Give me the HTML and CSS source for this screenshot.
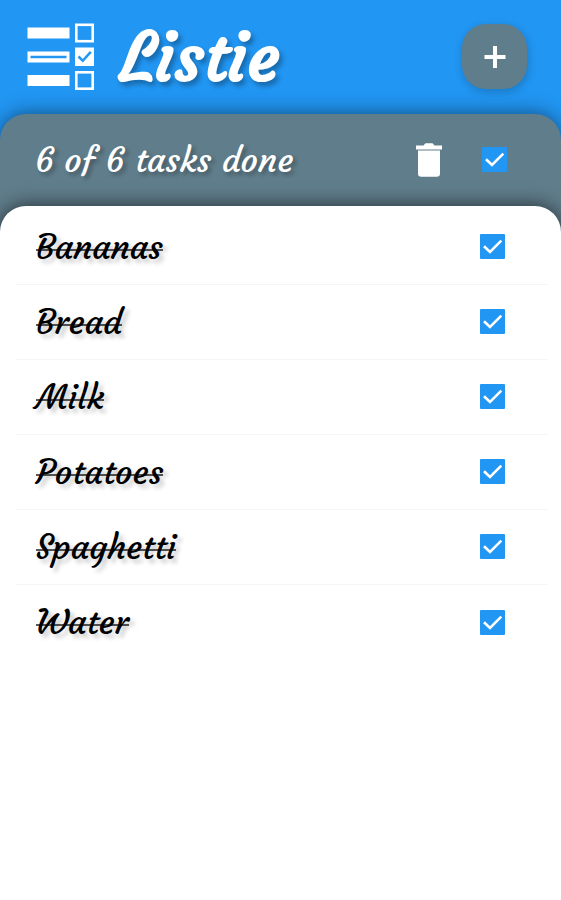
FILE: index.html
```html
<!DOCTYPE html>
<html lang="en">
<head>
    <meta charset="UTF-8">
    <meta name="viewport" content="width=device-width, initial-scale=1.0">
    <title>Listie</title>
    <link rel="stylesheet" href="styles.css">
</head>
<body>
    <svg width="0" height="0" class="defs">
        <symbol id="check" viewBox="0 0 25 25">
            <rect width="25" height="25" rx="1" fill="#2196f3"/>
            <path d="M4 12.2l6 5.8L21.3 6.7" fill="none" stroke="#fff" stroke-width="2.6"/>
        </symbol>
    </svg>
    <header>
        <svg class="logo" viewBox="0 0 68 68">
            <g fill="#fff">
                <rect x="0.5" y="4.5" width="42" height="11"/>
                <rect x="0.5" y="28.5" width="42" height="11"/>
                <rect x="0.5" y="52" width="42" height="11"/>
                <rect x="48" y="24.5" width="19" height="18.5"/>
            </g>
            <path d="M3.5 34h36" stroke="#2196f3" stroke-width="2.5"/>
            <g fill="none" stroke="#fff" stroke-width="2.6">
                <rect x="49.3" y="1.8" width="16.4" height="16.4"/>
                <rect x="49.3" y="49.3" width="16.4" height="16.4"/>
            </g>
            <path d="M51.5 33.5l4.3 4.3 8-9" fill="none" stroke="#2196f3" stroke-width="2.5"/>
        </svg>
        <h1>Listie</h1>
        <button class="add" aria-label="Add">
            <svg viewBox="0 0 22 24"><path d="M9 1h4v9h8.500v4H13v9H9v-9H.5v-4H9z" fill="#fff"/></svg>
        </button>
    </header>
    <main>
        <div class="status">
            <span class="count">6 of 6 tasks done</span>
            <svg class="trash" viewBox="0 0 26 34" fill="#fff">
                <path d="M0 2.5h7.5L9.5.3h7l2 2.2H26V6.500H0z"/>
                <path d="M2 7.5h22V30.5q0 3.3-3.3 3.3H5.3Q2 33.8 2 30.5z"/>
            </svg>
            <svg class="check"><use href="#check"/></svg>
        </div>
        <ul>
            <li><span>Bananas</span><svg class="check"><use href="#check"/></svg></li>
            <li><span>Bread</span><svg class="check"><use href="#check"/></svg></li>
            <li><span>Milk</span><svg class="check"><use href="#check"/></svg></li>
            <li><span>Potatoes</span><svg class="check"><use href="#check"/></svg></li>
            <li><span>Spaghetti</span><svg class="check"><use href="#check"/></svg></li>
            <li><span>Water</span><svg class="check"><use href="#check"/></svg></li>
        </ul>
    </main>
</body>
</html>
```
FILE: styles.css
```css
* {
    box-sizing: border-box;
}
body {
    margin: 0;
    height: 900px;
    display: flex;
    flex-direction: column;
    overflow: hidden;
    background-color: #2196f3;
    font-family: Courgette, Lato, sans-serif;
}
.defs {
    position: absolute;
}
header {
    height: 113.5px;
    padding: 0 34px 0 27px;
    display: flex;
    align-items: center;
}
.logo {
    width: 68px;
    height: 68px;
}
h1 {
    margin: 2px auto 0 25px;
    color: #fff;
    font-size: 68px;
    line-height: 80px;
    font-weight: bold;
    text-shadow: 3px 4px 5px rgba(0, 0, 0, 0.3);
}
.add {
    width: 65px;
    height: 65px;
    padding: 0;
    display: flex;
    align-items: center;
    justify-content: center;
    border: none;
    border-radius: 24px;
    background-color: #607d8b;
    box-shadow: 1px 3px 10px rgba(0, 0, 0, 0.2);
}
.add svg {
    width: 22px;
    height: 24px;
}
main {
    flex: 1;
    display: flex;
    flex-direction: column;
    border-radius: 26px 26px 0 0;
    background-color: #607d8b;
    box-shadow: 0 0 20px rgba(0, 0, 0, 0.5);
}
.status {
    height: 92.5px;
    padding: 0 54px 0 35px;
    display: flex;
    align-items: center;
}
.count {
    margin-right: auto;
    color: #fff;
    font-size: 34px;
    text-shadow: 3px 3px 4px rgba(0, 0, 0, 0.3);
}
.trash {
    width: 26px;
    height: 34px;
    margin-right: 40px;
}
.check {
    width: 25px;
    height: 25px;
}
ul {
    flex: 1;
    margin: 0;
    padding: 3.5px 13px 0 16px;
    list-style: none;
    border-radius: 26px 26px 0 0;
    background-color: #fff;
    box-shadow: 0 0 20px rgba(0, 0, 0, 0.65);
}
li {
    height: 75.1px;
    padding: 0 43px 0 20px;
    display: flex;
    align-items: center;
    justify-content: space-between;
    border-bottom: 1px solid #f5f5f5;
}
li:last-child {
    border-bottom-color: transparent;
}
li span {
    position: relative;
    color: #000;
    font-size: 34px;
    text-shadow: 4px 4px 4px rgba(0, 0, 0, 0.2);
}
/* thin strike, a bit lower than line-through puts it */
li span::after {
    content: "";
    position: absolute;
    left: 0;
    right: 0;
    top: calc(50% + 2px);
    height: 2px;
    background-color: rgba(0, 0, 0, 0.65);
}
```
